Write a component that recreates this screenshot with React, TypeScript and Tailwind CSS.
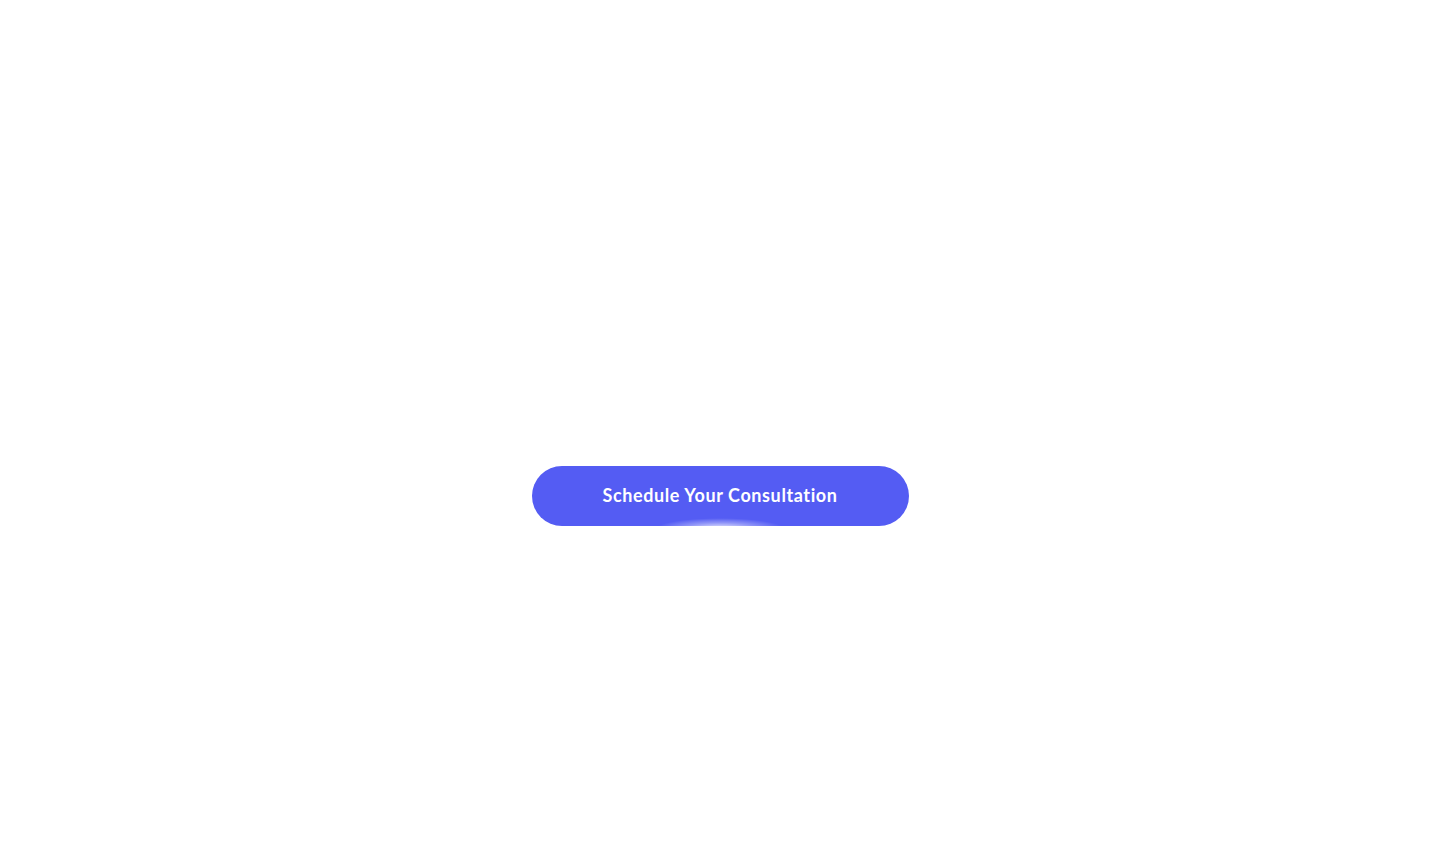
export default function App() {
  return (
    <div className="min-h-screen bg-white flex justify-center pt-[466px]" style={{ fontFamily: "Lato, 'Open Sans', sans-serif" }}>
      <button className="relative overflow-hidden w-[377px] h-[60px] rounded-full bg-[#545cf3] text-white text-[18px] font-bold tracking-[0.6px] pb-[2px]">
        <span className="relative z-10">Schedule Your Consultation</span>
        <span className="absolute left-1/2 -translate-x-1/2 bottom-[-14px] w-[130px] h-[22px] rounded-full bg-[radial-gradient(ellipse_at_center,rgba(255,255,255,0.95)_0%,rgba(255,255,255,0.35)_40%,rgba(255,255,255,0)_70%)]" />
      </button>
    </div>
  );
}
